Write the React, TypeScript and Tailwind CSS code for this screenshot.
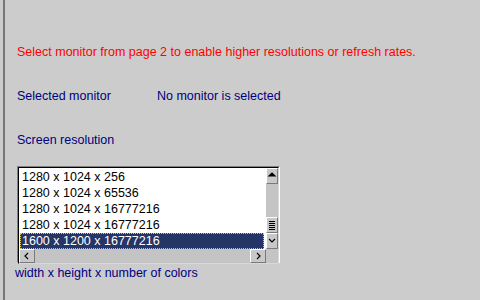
const rows = [
  '1280 x 1024 x 256',
  '1280 x 1024 x 65536',
  '1280 x 1024 x 16777216',
  '1280 x 1024 x 16777216',
  '1600 x 1200 x 16777216',
];

function ArrowBtn({ dir }: { dir: 'up' | 'down' | 'left' | 'right' }) {
  const paths: Record<string, string> = {
    up: 'M2 5 L5 2 L8 5 Z',
    down: 'M2 3 L5 6 L8 3',
    left: 'M6 2 L3 5 L6 8',
    right: 'M4 2 L7 5 L4 8',
  };
  const filled = dir === 'up';
  return (
    <div className="flex items-center justify-center w-full h-full bg-[#c8c8c8] border-t border-l border-white border-r border-b border-r-[#7a7a7a] border-b-[#7a7a7a]">
      <svg width="10" height="10" viewBox="0 0 10 10">
        <path d={paths[dir]} fill={filled ? '#000' : 'none'} stroke="#000" strokeWidth="1.2" />
      </svg>
    </div>
  );
}

export default function App() {
  return (
    <div className="w-[480px] h-[300px] bg-[#cccccc] flex overflow-hidden" style={{ fontFamily: '"Liberation Sans", Arial, sans-serif' }}>
      <div className="w-[3px] shrink-0" />
      <div className="w-[2px] shrink-0 bg-[#767676]" />
      <div className="flex flex-col pl-[12px] text-[12.5px] leading-[14px]">
        <div className="h-[45px]" />
        <div className="text-[#ff0000]">Select monitor from page 2 to enable higher resolutions or refresh rates.</div>
        <div className="h-[30px]" />
        <div className="flex text-[#000080]">
          <span className="w-[140px]">Selected monitor</span>
          <span>No monitor is selected</span>
        </div>
        <div className="h-[30px]" />
        <div className="text-[#000080]">Screen resolution</div>
        <div className="h-[19px]" />
        <div className="w-[263px] h-[97px] border-t border-l border-[#808080] border-r-white border-b-white border-r border-b flex flex-col">
          <div className="flex flex-1 border-t border-l border-black border-r-[#d8d8d8] border-b-[#d8d8d8] border-r border-b">
            <div className="flex-1 flex flex-col">
              <div className="flex-1 bg-white pt-[1px] pl-[1px] pr-[2px]">
                {rows.map((r, i) => (
                  <div
                    key={i}
                    className={
                      i === 4
                        ? 'h-[16px] leading-[16px] pl-[2px] text-white bg-[#253566] outline-1 outline-dotted outline-[#d9c76a] -outline-offset-1'
                        : 'h-[16px] leading-[16px] pl-[2px] text-black'
                    }
                  >
                    {r}
                  </div>
                ))}
              </div>
              <div className="h-[14px] flex bg-[#c4c4c4]">
                <div className="w-[16px] h-[14px]"><ArrowBtn dir="left" /></div>
                <div className="flex-1" />
                <div className="w-[16px] h-[14px]"><ArrowBtn dir="right" /></div>
              </div>
            </div>
            <div className="w-[12px] flex flex-col bg-[#c4c4c4]">
              <div className="h-[16px]"><ArrowBtn dir="up" /></div>
              <div className="flex-1" />
              <div className="h-[16px] flex items-center justify-center bg-[#c8c8c8] border-t border-l border-white border-r border-b border-r-[#7a7a7a] border-b-[#7a7a7a]">
                <div className="flex flex-col gap-[1px]">
                  <div className="w-[6px] h-[1px] bg-black" />
                  <div className="w-[6px] h-[1px] bg-black" />
                  <div className="w-[6px] h-[1px] bg-black" />
                  <div className="w-[6px] h-[1px] bg-black" />
                  <div className="w-[6px] h-[1px] bg-black" />
                </div>
              </div>
              <div className="h-[16px]"><ArrowBtn dir="down" /></div>
              <div className="h-[14px] bg-[#c4c4c4]" />
            </div>
          </div>
        </div>
        <div className="text-[#000080] -ml-[2px] mt-[3px]">width x height x number of colors</div>
      </div>
    </div>
  );
}
